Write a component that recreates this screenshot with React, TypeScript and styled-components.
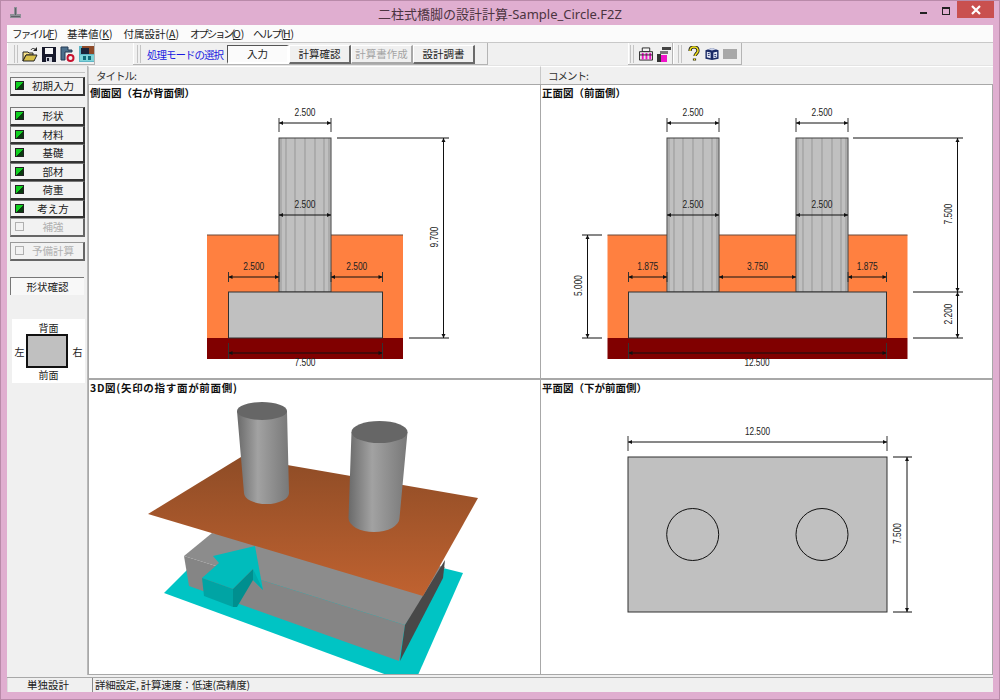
import { FC } from "react";
import styled, { createGlobalStyle } from "styled-components";

const GlobalStyle = createGlobalStyle`
  html, body {
    margin: 0;
    padding: 0;
    background: #e0aed0;
  }
`;

const FONT = `"Noto Sans CJK JP", "Liberation Sans", sans-serif`;

const DimText = styled.text`
  font-family: "Liberation Sans", sans-serif;
  font-size: 11px;
  fill: #222;
  text-anchor: middle;
`;

// the dimension figures in the drawings are narrower than Liberation Sans
const DimLabel: FC<{ x?: number; y: number; transform?: string; children: string }> = ({ x, y, transform, children }) => (
  <DimText x={x} y={y} transform={transform} textLength={children.length * 4.2} lengthAdjust="spacingAndGlyphs">
    {children}
  </DimText>
);

const Dim: FC<{ x1: number; x2: number; y: number; label?: string; top?: number; bottom?: number }> = ({
  x1,
  x2,
  y,
  label,
  top = 5,
  bottom = 9,
}) => (
  <g>
    <line x1={x1} x2={x2} y1={y} y2={y} stroke="#111" />
    <line x1={x1} x2={x1} y1={y - top} y2={y + bottom} stroke="#333" />
    <line x1={x2} x2={x2} y1={y - top} y2={y + bottom} stroke="#333" />
    <path d={`M${x1} ${y}l4 -2v4zM${x2} ${y}l-4 -2v4z`} fill="#111" />
    {label && (
      <DimLabel x={(x1 + x2) / 2} y={y - 7}>
        {label}
      </DimLabel>
    )}
  </g>
);

const VDim: FC<{ x: number; y1: number; y2: number; label: string; lx: number }> = ({ x, y1, y2, label, lx }) => (
  <g>
    <line x1={x} x2={x} y1={y1} y2={y2} stroke="#111" />
    <path d={`M${x} ${y1}l-2 4h4zM${x} ${y2}l-2 -4h4z`} fill="#111" />
    <DimLabel transform={`translate(${lx} ${(y1 + y2) / 2 - 1}) rotate(-90)`} y={4}>
      {label}
    </DimLabel>
  </g>
);

const Column: FC<{ x: number }> = ({ x }) => (
  <g>
    <rect x={x} y={138} width={52} height={154} fill="#c0c0c0" />
    {[-24, -19, -10, 0, 10, 19, 24].map((d) => (
      <line key={d} x1={x + 26 + d} x2={x + 26 + d} y1={138} y2={292} stroke="#979797" />
    ))}
    <rect x={x} y={138} width={52} height={154} fill="none" stroke="#404040" />
  </g>
);

const SideView: FC = () => (
  <Drawing width={451} height={293} viewBox="89 85 451 293">
    <rect x={207} y={235} width={196} height={103} fill="#ff8040" />
    <line x1={207} x2={403} y1={235} y2={235} stroke="#6a4a3a" />
    <rect x={207} y={338} width={196} height={21} fill="#800000" />
    <Column x={279} />
    <rect x={228.5} y={292} width={154} height={46} fill="#c0c0c0" stroke="#303030" />
    <Dim x1={279} x2={331} y={123} label="2.500" />
    <Dim x1={279} x2={331} y={215} label="2.500" top={0} bottom={0} />
    <Dim x1={228.5} x2={279} y={277} label="2.500" top={5} bottom={5} />
    <Dim x1={331} x2={382.5} y={277} label="2.500" top={5} bottom={5} />
    <Dim x1={228.5} x2={382.5} y={353} top={10} bottom={6} />
    <DimLabel x={305} y={366}>7.500</DimLabel>
    <line x1={337} x2={449} y1={138} y2={138} stroke="#111" />
    <line x1={409} x2={449} y1={338} y2={338} stroke="#111" />
    <VDim x={443.5} y1={138} y2={338} label="9.700" lx={434} />
  </Drawing>
);

const FrontView: FC = () => (
  <Drawing width={451} height={293} viewBox="541 85 451 293">
    <rect x={607.5} y={235} width={300} height={103} fill="#ff8040" />
    <line x1={607.5} x2={907.5} y1={235} y2={235} stroke="#6a4a3a" />
    <rect x={607.5} y={338} width={300} height={21} fill="#800000" />
    <Column x={667} />
    <Column x={796} />
    <rect x={628.5} y={292} width={258} height={46} fill="#c0c0c0" stroke="#303030" />
    <Dim x1={667} x2={719} y={123} label="2.500" />
    <Dim x1={796} x2={848} y={123} label="2.500" />
    <Dim x1={667} x2={719} y={215} label="2.500" top={0} bottom={0} />
    <Dim x1={796} x2={848} y={215} label="2.500" top={0} bottom={0} />
    <Dim x1={628.5} x2={667} y={277} label="1.875" top={5} bottom={5} />
    <Dim x1={719} x2={796} y={277} label="3.750" top={0} bottom={0} />
    <Dim x1={848} x2={886.5} y={277} label="1.875" top={5} bottom={5} />
    <Dim x1={628.5} x2={886.5} y={353} top={10} bottom={6} />
    <DimLabel x={757} y={366}>12.500</DimLabel>
    <line x1={582} x2={602} y1={235} y2={235} stroke="#111" />
    <line x1={582} x2={602} y1={338} y2={338} stroke="#111" />
    <VDim x={587.5} y1={235} y2={338} label="5.000" lx={578} />
    <line x1={853} x2={963} y1={138} y2={138} stroke="#111" />
    <line x1={913} x2={963} y1={292} y2={292} stroke="#111" />
    <line x1={913} x2={963} y1={338} y2={338} stroke="#111" />
    <VDim x={957.5} y1={138} y2={292} label="7.500" lx={948} />
    <VDim x={957.5} y1={292} y2={338} label="2.200" lx={948} />
  </Drawing>
);

const Cylinder: FC<{
  top: [number, number, number, number];
  bottom: [number, number, number, number];
}> = ({ top, bottom }) => {
  const [tx, ty, trx, try_] = top;
  const [bx, by, brx, bry] = bottom;
  return (
    <g>
      <path
        d={`M${tx - trx} ${ty}L${bx - brx} ${by}A${brx} ${bry} 0 0 0 ${bx + brx} ${by}L${tx + trx} ${ty}Z`}
        fill="url(#cylinder)"
      />
      <ellipse cx={tx} cy={ty} rx={trx} ry={try_} fill="#666666" />
    </g>
  );
};

const View3D: FC = () => (
  <Drawing width={451} height={294} viewBox="89 380 451 294">
    <defs>
      <linearGradient id="cylinder" x1="0" x2="1" y1="0" y2="0">
        <stop offset="0" stopColor="#6a6a6a" />
        <stop offset="0.4" stopColor="#a2a2a2" />
        <stop offset="1" stopColor="#787878" />
      </linearGradient>
      <linearGradient id="plate" x1="0" x2="0" y1="0" y2="1">
        <stop offset="0" stopColor="#8e4c26" />
        <stop offset="1" stopColor="#c06230" />
      </linearGradient>
    </defs>
    <polygon points="164,593 190,567 443,568 463,573 418,675 387,675" fill="#00c4c4" />
    <polygon points="184,556 212,533 445,567 405,625" fill="#8c8c8c" />
    <polygon points="184,556 405,625 399,661 189,586" fill="#858585" />
    <polygon points="405,625 445,560 443,578 400,661" fill="#484848" />
    <polygon points="213,556 255,546 263,590 253,580 253,569 233,589 202,578 219,563" fill="#00bcbc" />
    <polygon points="253,569 253,580 263,590" fill="#00acac" />
    <polygon points="233,589 253,569 253,580 237,607 233,607" fill="#008f8f" />
    <polygon points="202,578 233,589 233,607 204,596" fill="#00a4a4" />
    <polygon points="148,514 241,457 478,498 423,596" fill="url(#plate)" />
    <Cylinder top={[262, 411, 25, 9]} bottom={[266.5, 493, 22.5, 11]} />
    <Cylinder top={[379.5, 432, 28, 11]} bottom={[374, 518, 25.5, 14]} />
  </Drawing>
);

const PlanView: FC = () => (
  <Drawing width={451} height={294} viewBox="541 380 451 294">
    <rect x={628} y={457} width={259} height={155} fill="#c0c0c0" stroke="#303030" />
    <circle cx={692.7} cy={534.5} r={26} fill="none" stroke="#111" />
    <circle cx={822} cy={534.5} r={26} fill="none" stroke="#111" />
    <Dim x1={628} x2={887} y={442} label="12.500" top={6} bottom={9} />
    <line x1={893} x2={912} y1={457} y2={457} stroke="#111" />
    <line x1={893} x2={912} y1={612} y2={612} stroke="#111" />
    <VDim x={907} y1={457} y2={612} label="7.500" lx={897} />
  </Drawing>
);

const CloseIcon: FC = () => (
  <svg width="12" height="10" viewBox="0 0 12 10">
    <path d="M2 1l8 8M10 1l-8 8" stroke="#fff" strokeWidth="2.2" />
  </svg>
);

const AppIcon: FC = () => (
  <svg width="14" height="14" viewBox="0 0 14 14">
    <path d="M5 1h3v7h4v4H1V8h4z" fill="#8d8f96" />
    <path d="M6 2h1v7H6zM2 10h9v1H2z" fill="#5f6168" />
  </svg>
);

const OpenIcon: FC = () => (
  <svg width="16" height="16" viewBox="0 0 16 16">
    <path d="M1 6h5l1 1h4v2H4l-3 6z" fill="#f4e08a" stroke="#222" />
    <path d="M1 15l3-6h11l-3 6z" fill="#d8c04a" stroke="#222" />
    <path d="M9 4c1-2 3-2 5 0" fill="none" stroke="#222" />
    <path d="M15 1v4h-4z" fill="#222" />
  </svg>
);

const SaveIcon: FC = () => (
  <svg width="14" height="15" viewBox="0 0 14 15">
    <path d="M0 0h14v15H0z" fill="#16182a" />
    <path d="M3 1h8v6H3z" fill="#f4f4f4" />
    <path d="M4 10h6v5H4z" fill="#cfd2dc" />
    <path d="M5 11h2v3H5z" fill="#16182a" />
  </svg>
);

const PrintFileIcon: FC = () => (
  <svg width="15" height="16" viewBox="0 0 15 16">
    <path d="M1 1h7v3h4v2H5v8H1z" fill="#4d6f8c" stroke="#243a55" />
    <path d="M8 8h3v3H8z" fill="#24486e" />
    <circle cx="10.5" cy="12" r="3" fill="#f4f4f4" stroke="#c8102e" strokeWidth="2" />
  </svg>
);

const SampleIcon: FC = () => (
  <svg width="15" height="16" viewBox="0 0 15 16">
    <path d="M0 0h15v16H0z" fill="#5fb6c6" />
    <path d="M3 0h12v8H3z" fill="#8f4a28" />
    <path d="M2 2h8v6H2z" fill="#1b2438" />
    <path d="M1 9h14v6H1z" fill="#7fd4d8" />
    <path d="M4 10h3v4H4zM9 10h3v4H9z" fill="#0f6a78" />
  </svg>
);

const MachineIcon: FC = () => (
  <svg width="15" height="14" viewBox="0 0 15 14">
    <path d="M3.5 0.5h8v4h-8z" fill="#f4f4f4" stroke="#222" />
    <path d="M0.5 4.5h14v9H0.5z" fill="#e4e4e4" stroke="#222" />
    <path d="M3 6h2v7H3zM7 6h2v7H7zM11 6h2v7h-2z" fill="#f012c8" />
    <path d="M1 8h13" stroke="#222" />
  </svg>
);

const BlocksIcon: FC = () => (
  <svg width="14" height="16" viewBox="0 0 14 16">
    <path d="M5 1h9v3H5z" fill="#444" />
    <path d="M3 5h8v3H3z" fill="#777" />
    <path d="M0 8h4v8H0z" fill="#333" />
    <path d="M4 9h6v7H4z" fill="#f012c8" />
  </svg>
);

const HelpIcon: FC = () => (
  <svg width="12" height="16" viewBox="0 0 12 16">
    <path d="M2 5C2 2 4 1 6 1s4 1 4 4c0 2-3 3-3 5M6.5 12.5v2" fill="none" stroke="#222" strokeWidth="3.2" />
    <path d="M2 5C2 2 4 1 6 1s4 1 4 4c0 2-3 3-3 5M6.5 12.8v1.4" fill="none" stroke="#f2e21a" strokeWidth="1.5" />
  </svg>
);

const BookIcon: FC = () => (
  <svg width="15" height="14" viewBox="0 0 15 14">
    <path d="M0.5 3L7.5 0.5l7 2.5v9l-7 1.5-7-1.5z" fill="#1a2a66" />
    <path d="M3 1.8L7.5 0.5l4.5 1.3-4.5 1.5z" fill="#cfd6ea" />
    <path d="M2 4.5l4 1v6l-4-1zM9 5.5l4-1v6l-4 1z" fill="#e8ecf8" />
    <path d="M3 6.5h2M3 8.5h2M10 7.5h2M10 9.5h2" stroke="#1a2a66" />
  </svg>
);

const MENU = [
  { label: "ファイル(", key: "F", tight: -1.8 },
  { label: "基準値(", key: "K", tight: 0 },
  { label: "付属設計(", key: "A", tight: 0 },
  { label: "オプション(", key: "O", tight: -2.2 },
  { label: "ヘルプ(", key: "H", tight: -1.3 },
];

export default function App() {
  return (
    <Window>
      <GlobalStyle />
      <TitleBar>
        <TitleIcon>
          <AppIcon />
        </TitleIcon>
        <TitleText>二柱式橋脚の設計計算-Sample_Circle.F2Z</TitleText>
        <WindowControls>
          <MinButton />
          <MaxButton />
          <CloseButton>
            <CloseIcon />
          </CloseButton>
        </WindowControls>
      </TitleBar>
      <Client>
        <MenuBar>
          {MENU.map((m) => (
            <MenuItem key={m.key} $tight={m.tight}>
              {m.label}
              <u>{m.key}</u>)
            </MenuItem>
          ))}
        </MenuBar>
        <ToolBar>
          <FileGroup>
            <Grip />
            <ToolIcon><OpenIcon /></ToolIcon>
            <ToolIcon><SaveIcon /></ToolIcon>
            <ToolIcon><PrintFileIcon /></ToolIcon>
            <ToolIcon><SampleIcon /></ToolIcon>
          </FileGroup>
          <ModeGroup>
            <Grip />
            <ModeLabel>処理モードの選択</ModeLabel>
            <ModeButton $active>入力</ModeButton>
            <ModeButton>計算確認</ModeButton>
            <ModeButton $disabled>計算書作成</ModeButton>
            <ModeButton>設計調書</ModeButton>
          </ModeGroup>
          <ToolsGroup>
            <Grip />
            <ToolIcon><MachineIcon /></ToolIcon>
            <ToolIcon><BlocksIcon /></ToolIcon>
          </ToolsGroup>
          <HelpGroup>
            <Grip />
            <ToolIcon><HelpIcon /></ToolIcon>
            <ToolIcon><BookIcon /></ToolIcon>
            <ToolIcon><GrayChip /></ToolIcon>
          </HelpGroup>
        </ToolBar>
        <Body>
          <SideBar>
            <SideRule />
            <SideButton $checked>初期入力</SideButton>
            <SideGroup>
              <SideButton $checked>形状</SideButton>
              <SideButton $checked>材料</SideButton>
              <SideButton $checked>基礎</SideButton>
              <SideButton $checked>部材</SideButton>
              <SideButton $checked>荷重</SideButton>
              <SideButton $checked>考え方</SideButton>
              <SideButton>補強</SideButton>
            </SideGroup>
            <SideButton>予備計算</SideButton>
            <CheckPanel>形状確認</CheckPanel>
            <Compass>
              <span>背面</span>
              <CompassRow>
                <span>左</span>
                <CompassBox />
                <span>右</span>
              </CompassRow>
              <span>前面</span>
            </Compass>
          </SideBar>
          <Main>
            <HeadRow>
              <HeadCell>タイトル:</HeadCell>
              <HeadCell>コメント:</HeadCell>
            </HeadRow>
            <Panels>
              <Panel>
                <PanelTitle>側面図（右が背面側）</PanelTitle>
                <SideView />
              </Panel>
              <Panel>
                <PanelTitle>正面図（前面側）</PanelTitle>
                <FrontView />
              </Panel>
              <Panel>
                <PanelTitle $spaced>3D図(矢印の指す面が前面側)</PanelTitle>
                <View3D />
              </Panel>
              <Panel>
                <PanelTitle>平面図（下が前面側）</PanelTitle>
                <PlanView />
              </Panel>
            </Panels>
          </Main>
        </Body>
        <StatusBar>
          <StatusLeft>単独設計</StatusLeft>
          <StatusRight>詳細設定, 計算速度：低速(高精度)</StatusRight>
        </StatusBar>
      </Client>
    </Window>
  );
}

const Window = styled.div`
  width: 1000px;
  height: 700px;
  box-sizing: border-box;
  background: #e0aed0;
  border: 1px solid #b98aa9;
  padding: 0 6px 7px 6px;
  display: flex;
  flex-direction: column;
  overflow: hidden;
  font-family: ${FONT};
  color: #222;
`;

const TitleBar = styled.div`
  height: 24px;
  flex: none;
  display: flex;
  align-items: center;
  position: relative;
`;

const TitleIcon = styled.div`
  display: flex;
  margin-left: 2px;
`;

const TitleText = styled.div`
  position: absolute;
  left: 0;
  right: 0;
  text-align: center;
  font-family: "Noto Sans", ${FONT};
  font-size: 13px;
  color: #4b3440;
`;

const WindowControls = styled.div`
  margin-left: auto;
  display: flex;
  align-items: flex-start;
  align-self: flex-start;
  position: relative;
  margin-right: -1px;
`;

const MinButton = styled.div`
  width: 7px;
  height: 2px;
  background: #222;
  margin: 11px 15px 0 0;
`;

const MaxButton = styled.div`
  width: 6px;
  height: 5px;
  border: 1px solid #222;
  border-top-width: 2px;
  margin: 6px 7px 0 0;
`;

const CloseButton = styled.div`
  width: 37px;
  height: 17px;
  background: #c9504f;
  display: flex;
  align-items: center;
  justify-content: center;
`;

const Client = styled.div`
  flex: 1;
  min-height: 0;
  display: flex;
  flex-direction: column;
  background: #f0f0f0;
`;

const MenuBar = styled.div`
  height: 18px;
  flex: none;
  box-sizing: border-box;
  background: #fbfbfb;
  display: flex;
  align-items: center;
  padding-left: 5px;
  gap: 11px;
  border-bottom: 1px solid #c8c8c8;
`;

const MenuItem = styled.span<{ $tight: number }>`
  font-size: 10.5px;
  color: #222;
  letter-spacing: ${(p) => p.$tight}px;

  u {
    letter-spacing: 0;
  }
`;

const ToolBar = styled.div`
  height: 23px;
  flex: none;
  box-sizing: border-box;
  display: flex;
  align-items: stretch;
  background: #f0f0f0;
  border-bottom: 1px solid #e4e4e4;
`;

const ToolIcon = styled.div`
  width: 17px;
  flex: none;
  display: flex;
  align-items: center;
  justify-content: center;
`;

const ToolGroup = styled.div`
  display: flex;
  align-items: center;
  box-shadow: inset -1px -1px 0 #b4b4b4, inset 1px 0 0 #fff;
`;

const FileGroup = styled(ToolGroup)`
  gap: 2px;
  width: 88px;
`;

const ModeGroup = styled(ToolGroup)`
  margin-left: 38px;
  width: 355px;
`;

const ToolsGroup = styled(ToolGroup)`
  margin-left: 140px;
  width: 45px;
  gap: 4px;
  ${ToolIcon} {
    width: 14px;
  }
`;

const HelpGroup = styled(ToolGroup)`
  width: 69px;
  gap: 4px;
  ${ToolIcon} {
    width: 14px;
  }
`;

const Grip = styled.div`
  width: 4px;
  height: 18px;
  flex: none;
  box-sizing: border-box;
  border-left: 1px solid #c4c4c4;
  border-right: 1px solid #c4c4c4;
  margin: 0 1px 0 7px;

  ${ModeGroup} > & {
    margin: 0 6px 0 4px;
  }
  ${ToolsGroup} > & {
    margin: 0 1px 0 2px;
  }
  ${HelpGroup} > & {
    margin: 0 1px 0 5px;
  }
`;

const GrayChip = styled.div`
  width: 14px;
  height: 10px;
  background: #a8a8a8;
`;

const ModeLabel = styled.span`
  width: 80px;
  flex: none;
  font-size: 10.5px;
  letter-spacing: -1px;
  color: #1a1ae0;
`;

const ModeButton = styled.div<{ $active?: boolean; $disabled?: boolean }>`
  width: 62px;
  height: 19px;
  flex: none;
  box-sizing: border-box;
  display: flex;
  align-items: center;
  justify-content: center;
  font-size: 10.5px;
  background: ${(p) => (p.$active ? "#fbfbfb" : "#f0f0f0")};
  color: ${(p) => (p.$disabled ? "#a4a4a4" : "#222")};
  border-style: solid;
  border-width: 1px 2px 2px 1px;
  border-color: ${(p) =>
    p.$active ? "#555 #fff #fff #555" : p.$disabled ? "#fff #a8a8a8 #a8a8a8 #fff" : "#fff #6a6a6a #6a6a6a #fff"};
`;

const Body = styled.div`
  flex: 1;
  min-height: 0;
  display: flex;
`;

const SideBar = styled.div`
  width: 81px;
  flex: none;
  box-sizing: border-box;
  padding: 6px 2px 0 3px;
  display: flex;
  flex-direction: column;
  align-items: stretch;
  border-right: 1px solid #b8b8b8;
`;

const SideRule = styled.div`
  height: 1px;
  flex: none;
  background: #c4c4c4;
  margin-bottom: 4px;
`;

const SideGroup = styled.div`
  display: flex;
  flex-direction: column;
  margin: 11.5px 0 5.5px;
`;

const SideButton = styled.div<{ $checked?: boolean }>`
  height: 18.5px;
  flex: none;
  box-sizing: border-box;
  position: relative;
  display: flex;
  align-items: center;
  justify-content: center;
  padding-left: 12px;
  font-size: 10.5px;
  background: #f2f2f2;
  color: ${(p) => (p.$checked ? "#222" : "#b0b0b0")};
  border-style: solid;
  border-width: 1px 2px 2px 1px;
  border-color: ${(p) => (p.$checked ? "#777 #333 #333 #777" : "#999 #666 #666 #999")};

  &::before {
    content: "";
    position: absolute;
    left: 4px;
    top: 3px;
    width: 7px;
    height: 7px;
    border: 1px solid ${(p) => (p.$checked ? "#222" : "#b0b0b0")};
    background: ${(p) => (p.$checked ? "linear-gradient(135deg, #10d020 55%, #0a3a10 55%)" : "#f2f2f2")};
  }
`;

const CheckPanel = styled.div`
  height: 18px;
  flex: none;
  box-sizing: border-box;
  margin: 16.5px 1px 0 0;
  display: flex;
  align-items: center;
  justify-content: center;
  font-size: 10.5px;
  background: #f8f8f8;
  border-style: solid;
  border-width: 1px 0 0 1px;
  border-color: #777;
`;

const Compass = styled.div`
  margin: 24px 0 0 2px;
  height: 64px;
  background: #fff;
  display: flex;
  flex-direction: column;
  align-items: center;
  justify-content: center;
  font-size: 10px;
  line-height: 13px;
`;

const CompassRow = styled.div`
  display: flex;
  align-items: center;
  gap: 3px;
`;

const CompassBox = styled.div`
  width: 38px;
  height: 30px;
  margin: 0 1.5px 0 -1.5px;
  background: #c0c0c0;
  border: 2px solid #111;
`;

const Main = styled.div`
  flex: 1;
  min-width: 0;
  display: flex;
  flex-direction: column;
`;

const HeadRow = styled.div`
  height: 18px;
  flex: none;
  display: grid;
  grid-template-columns: 452px 1fr;
`;

const HeadCell = styled.div`
  font-size: 10.5px;
  letter-spacing: -1px;
  line-height: 18px;
  padding-left: 7px;
  color: #333;
  border-left: 1px solid #c8c8c8;
  border-top: 1px solid #fff;
  box-sizing: border-box;
`;

const Panels = styled.div`
  flex: 1;
  min-height: 0;
  display: grid;
  grid-template-columns: 452px 1fr;
  grid-template-rows: 295px 1fr;
`;

const Panel = styled.div`
  position: relative;
  background: #fff;
  box-sizing: border-box;
  border: 1px solid #a8a8a8;
  border-right: 0;
  overflow: hidden;

  &:nth-child(even) {
    border-right: 1px solid #a8a8a8;
  }
`;

const PanelTitle = styled.div<{ $spaced?: boolean }>`
  position: absolute;
  left: 1px;
  top: 0;
  font-size: 10.5px;
  font-weight: 700;
  line-height: 15px;
  color: #111;
  letter-spacing: ${(p) => (p.$spaced ? "0.7px" : "0")};
`;

const Drawing = styled.svg`
  display: block;
`;

const StatusBar = styled.div`
  height: 15px;
  flex: none;
  box-sizing: border-box;
  display: flex;
  border-top: 1px solid #a8a8a8;
  margin-top: 2px;
`;

const StatusLeft = styled.div`
  width: 80px;
  flex: none;
  text-align: center;
  font-size: 10.5px;
  line-height: 14px;
  border-left: 1px solid #ddd;
`;

const StatusRight = styled.div`
  flex: 1;
  margin-left: 4px;
  padding-left: 2px;
  font-size: 10.5px;
  letter-spacing: -0.25px;
  line-height: 14px;
  border-left: 1px solid #888;
`;
